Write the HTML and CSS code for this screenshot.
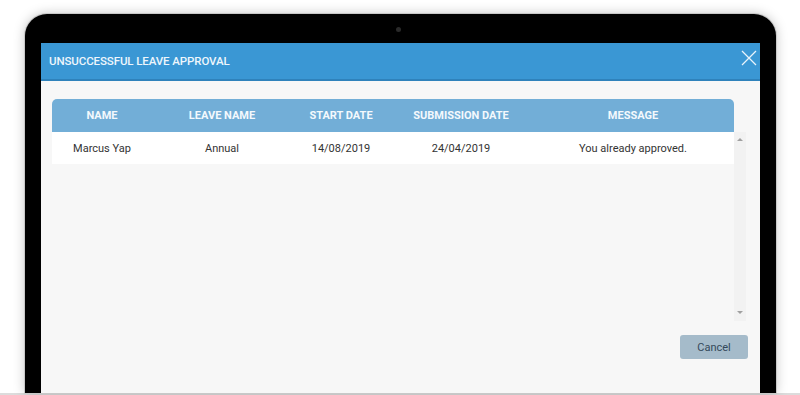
FILE: index.html
```html
<!DOCTYPE html>
<html lang="en">
<head>
    <meta charset="UTF-8">
    <meta name="viewport" content="width=device-width, initial-scale=1.0">
    <title>Unsuccessful Leave Approval</title>
    <link rel="stylesheet" href="styles.css">
</head>
<body>
    <div class="laptop">
        <span class="camera"></span>
        <div class="screen">
            <div class="modal-header">
                <span class="modal-title">UNSUCCESSFUL LEAVE APPROVAL</span>
                <svg class="close" width="16" height="16" viewBox="0 0 16 16">
                    <path d="M1 1 L15 15 M15 1 L1 15" stroke="#e8f3fb" stroke-width="1.3" fill="none"/>
                </svg>
            </div>
            <div class="modal-body">
                <div class="grid-head">
                    <div class="col c1">NAME</div>
                    <div class="col c2">LEAVE NAME</div>
                    <div class="col c3">START DATE</div>
                    <div class="col c4">SUBMISSION DATE</div>
                    <div class="col c5">MESSAGE</div>
                </div>
                <div class="grid-body">
                    <div class="rows">
                        <div class="row">
                            <div class="col c1">Marcus Yap</div>
                            <div class="col c2">Annual</div>
                            <div class="col c3">14/08/2019</div>
                            <div class="col c4">24/04/2019</div>
                            <div class="col c5">You already approved.</div>
                        </div>
                    </div>
                    <div class="scrollbar">
                        <span class="arrow up"></span>
                        <span class="arrow down"></span>
                    </div>
                </div>
                <div class="actions">
                    <button class="btn">Cancel</button>
                </div>
            </div>
        </div>
    </div>
    <div class="base"></div>
</body>
</html>
```

FILE: styles.css
```css
body {
    margin: 0;
    padding: 0;
    background: #fff;
    font-family: Roboto, Arial, sans-serif;
    height: 395px;
    overflow: hidden;
}
.laptop {
    position: relative;
    margin: 14px 0 0 25px;
    width: 719px;
    height: 350px;
    padding: 29px 16px 0 16px;
    background: #000;
    border-radius: 22px 22px 0 0;
    box-shadow: 0 0 0 1px #c8c8c8, 0 0 12px rgba(0, 0, 0, 0.25);
}
.camera {
    position: absolute;
    left: 371px;
    top: 13px;
    width: 5px;
    height: 5px;
    border-radius: 50%;
    background: #2a2a2a;
}
.screen {
    height: 350px;
    background: #f7f7f7;
    display: flex;
    flex-direction: column;
}
.modal-header {
    height: 36px;
    background: #3a97d4;
    border-bottom: 2px solid #2f82bb;
    display: flex;
    align-items: center;
    justify-content: space-between;
    padding: 0 3px 0 8px;
}
.modal-title {
    color: #eef6fc;
    font-size: 11.5px;
    font-weight: 500;
    letter-spacing: -0.1px;
}
.close {
    margin-top: -6px;
}
.modal-body {
    padding: 18px 12px 0 11px;
}
.grid-head {
    width: 682px;
    height: 33px;
    display: flex;
    align-items: center;
    background: #72aed7;
    border-radius: 5px 5px 0 0;
    color: #f4f9fd;
    font-size: 11px;
    font-weight: bold;
}
.col {
    text-align: center;
}
.c1 { width: 100px; }
.c2 { width: 140px; }
.c3 { width: 98px; }
.c4 { width: 142px; }
.c5 { width: 202px; }
.grid-body {
    display: flex;
    height: 189px;
}
.rows {
    width: 682px;
}
.row {
    height: 32px;
    display: flex;
    align-items: center;
    background: #fff;
    color: #333;
    font-size: 11px;
}
.scrollbar {
    position: relative;
    width: 12px;
    background: #f2f2f2;
}
.arrow {
    position: absolute;
    left: 3px;
    width: 0;
    height: 0;
    border-left: 3px solid transparent;
    border-right: 3px solid transparent;
}
.up {
    top: 6px;
    border-bottom: 3px solid #a0a0a0;
}
.down {
    bottom: 7px;
    border-top: 3px solid #a0a0a0;
}
.actions {
    display: flex;
    justify-content: flex-end;
    padding-top: 14px;
}
.btn {
    width: 68px;
    height: 24px;
    border: none;
    border-radius: 3px;
    background: #a5bbca;
    color: #34495a;
    font-family: Roboto, Arial, sans-serif;
    font-size: 11px;
}
.base {
    height: 2px;
    background: #dcdcdc;
}
```
